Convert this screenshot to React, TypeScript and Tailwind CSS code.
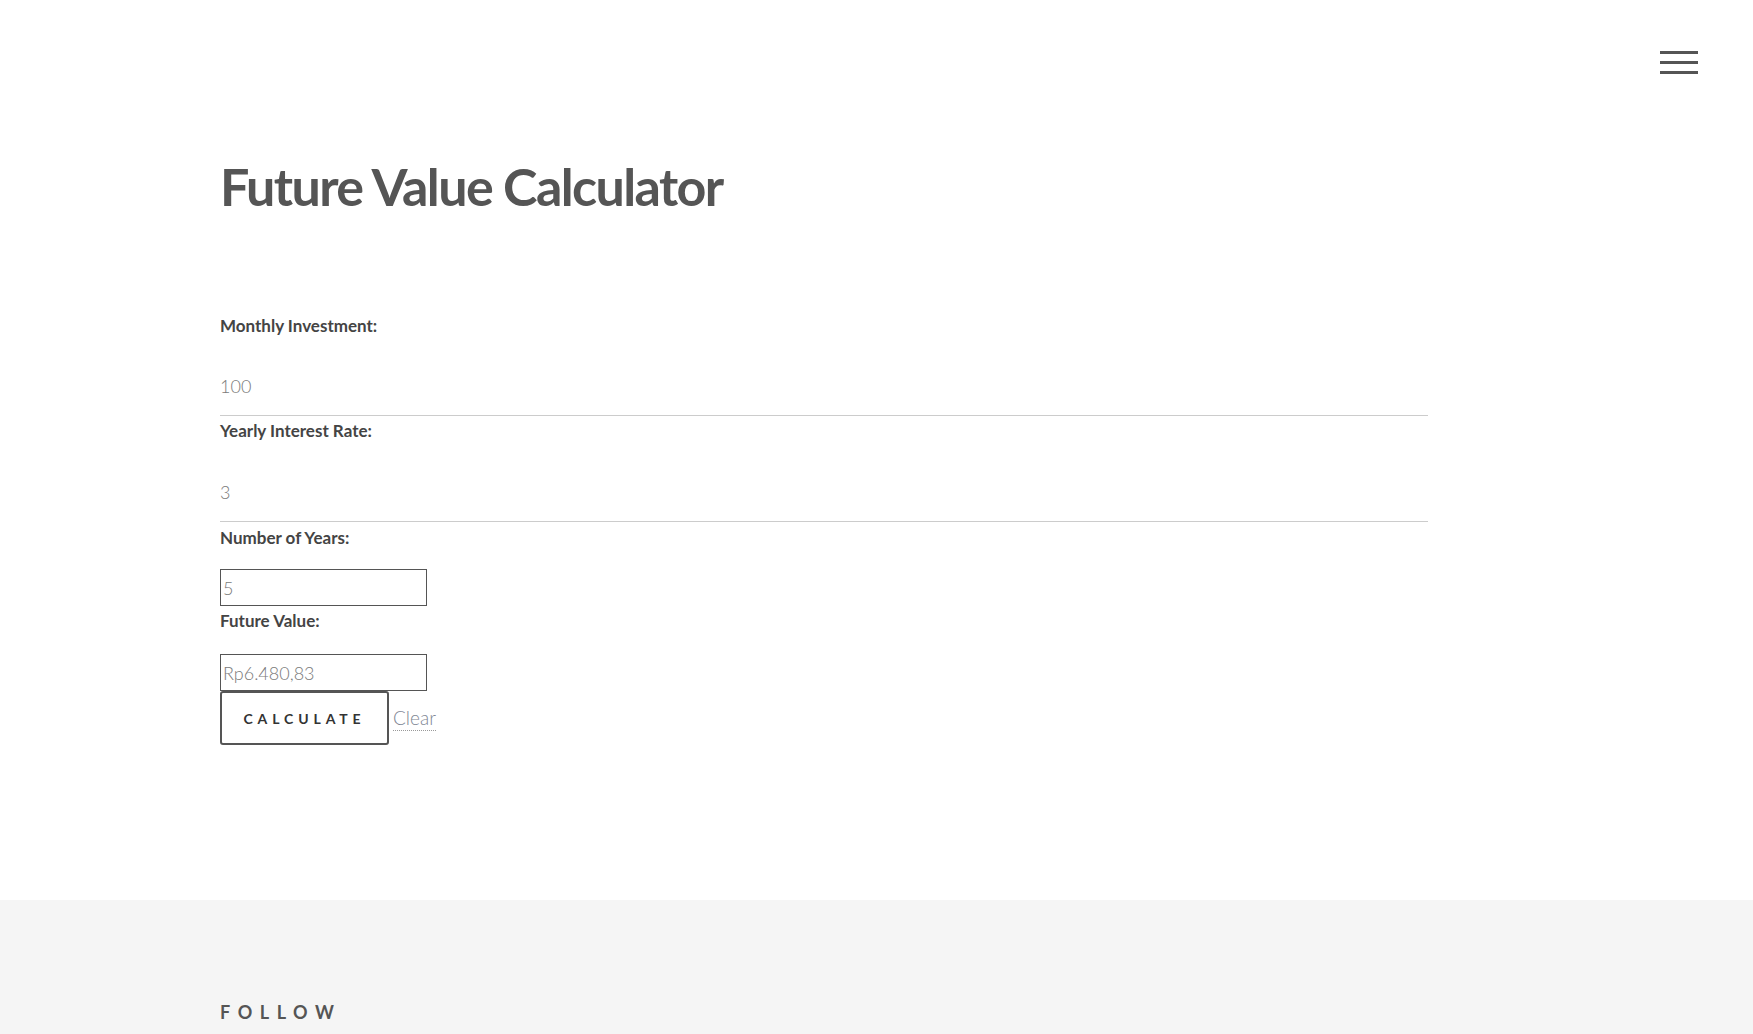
export default function App() {
    return (
        <div className="min-h-screen bg-white font-['Lato','Open_Sans',sans-serif] text-[#555]">
            {/* header */}
            <div className="flex justify-end pt-[51px] pr-[55px]">
                <button type="button" className="flex w-[38px] flex-col gap-[7px]">
                    <span className="block h-[3px] w-full bg-[#555]" />
                    <span className="block h-[3px] w-full bg-[#555]" />
                    <span className="block h-[3px] w-full bg-[#555]" />
                </button>
            </div>

            <main className="pl-[220px] pb-[155px]">
                <h1 className="mt-[81px] text-[52px] leading-[62px] font-bold tracking-[-1.6px] text-[#555]">
                    Future Value Calculator
                </h1>

                <form className="mt-[95px] w-[1208px]" onSubmit={(e) => e.preventDefault()}>
                    {/* Monthly Investment */}
                    <label className="block h-[24px] pt-[2px] text-[17px] leading-[24px] font-bold text-[#444]">
                        Monthly Investment:
                    </label>
                    <input
                        type="text"
                        defaultValue="100"
                        className="mt-[20px] block h-[60px] w-full border-b border-[#ccc] text-[18px] font-light text-[#7a7a7a] outline-none"
                    />

                    {/* Yearly Interest Rate */}
                    <label className="mt-[2px] block h-[24px] pt-[1px] text-[17px] leading-[24px] font-bold text-[#444]">
                        Yearly Interest Rate:
                    </label>
                    <input
                        type="text"
                        defaultValue="3"
                        className="mt-[20px] block h-[60px] w-full border-b border-[#ccc] text-[18px] font-light text-[#7a7a7a] outline-none"
                    />

                    {/* Number of Years */}
                    <label className="mt-[3px] block h-[24px] pt-[1px] text-[17px] leading-[24px] font-bold text-[#444]">
                        Number of Years:
                    </label>
                    <input
                        type="text"
                        defaultValue="5"
                        className="mt-[20px] block h-[37px] w-[207px] border border-[#555] px-[2px] text-[18px] font-light text-[#7a7a7a] outline-none"
                    />

                    {/* Future Value */}
                    <label className="mt-[2px] block h-[24px] pt-[1px] text-[17px] leading-[24px] font-bold text-[#444]">
                        Future Value:
                    </label>
                    <input
                        type="text"
                        readOnly
                        defaultValue="Rp6.480,83"
                        className="mt-[22px] block h-[37px] w-[207px] border border-[#555] px-[2px] text-[18px] font-light text-[#7a7a7a] outline-none"
                    />

                    <div className="flex items-center gap-[4px]">
                        <button
                            type="submit"
                            className="h-[54px] w-[169px] rounded-[3px] border-2 border-[#555] text-[14px] font-bold tracking-[0.35em] text-[#333]"
                        >
                            CALCULATE
                        </button>
                        <a
                            href="#"
                            className="border-b border-dotted border-[#999] text-[19px] leading-[24px] font-light text-[#7f8794]"
                        >
                            Clear
                        </a>
                    </div>
                </form>
            </main>

            {/* footer */}
            <footer className="h-[200px] bg-[#f5f5f5] pl-[220px] pt-[99px]">
                <h3 className="text-[18px] font-bold tracking-[0.42em] text-[#555]">FOLLOW</h3>
            </footer>
        </div>
    );
}
